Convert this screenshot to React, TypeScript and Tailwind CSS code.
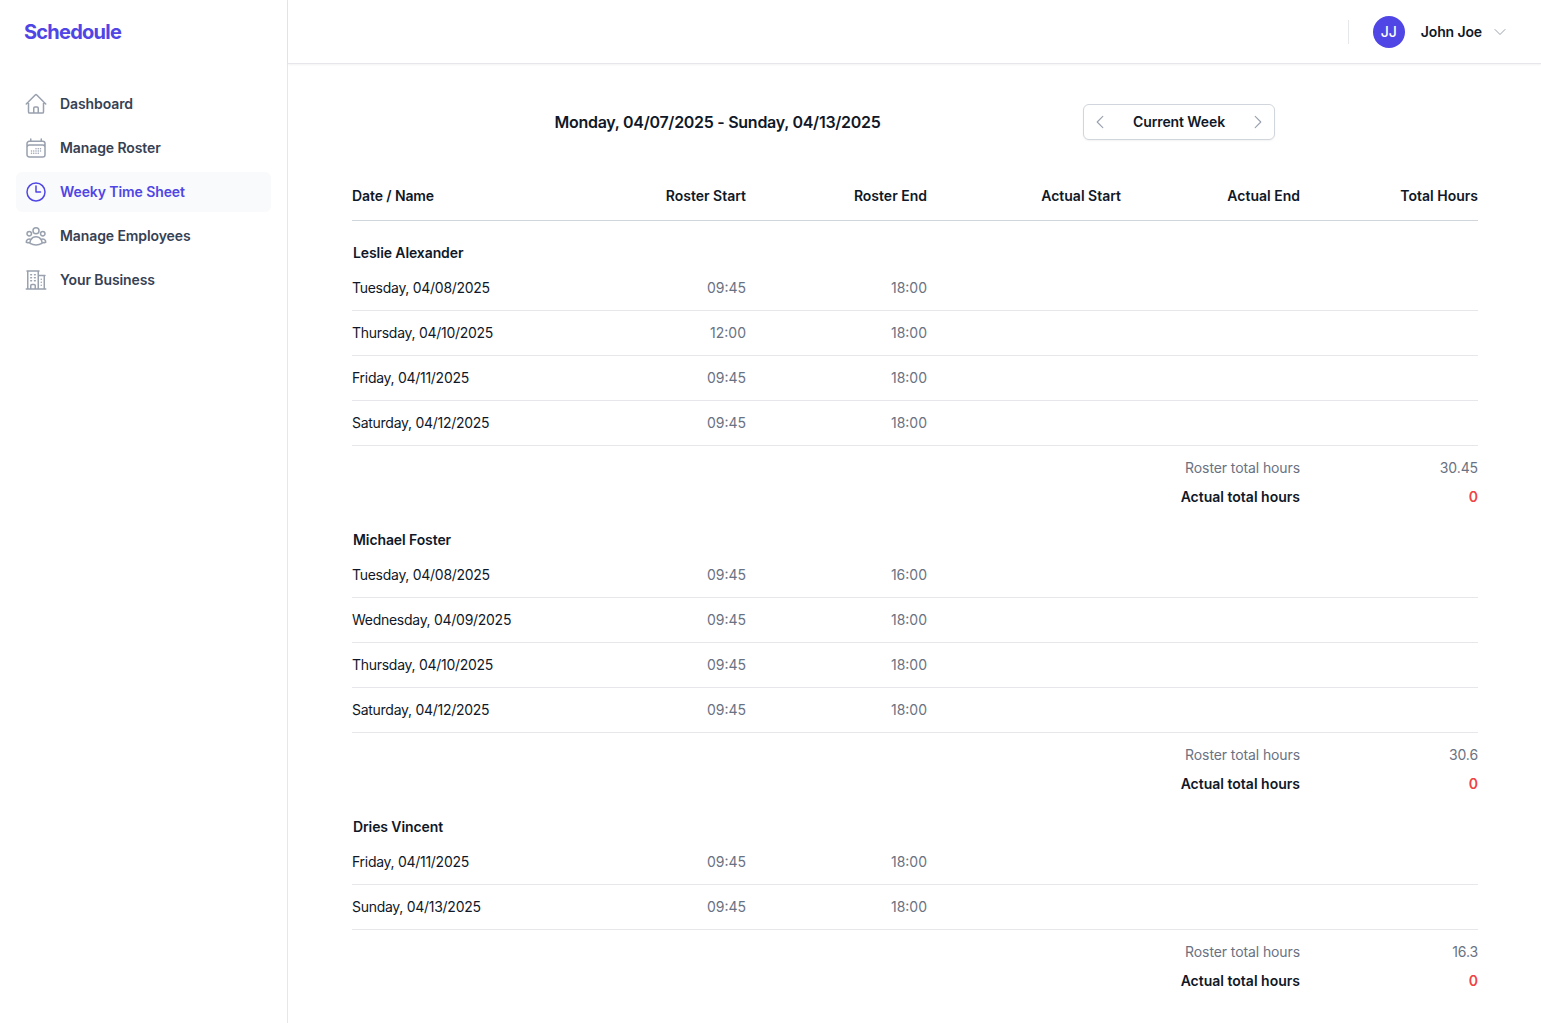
import { FC, ReactNode } from "react";
import {
  HiOutlineBuildingOffice2,
  HiOutlineCalendarDays,
  HiOutlineChevronDown,
  HiOutlineChevronLeft,
  HiOutlineChevronRight,
  HiOutlineClock,
  HiOutlineHome,
  HiOutlineUserGroup,
} from "react-icons/hi2";

const NAV = [
  { label: "Dashboard", Icon: HiOutlineHome },
  { label: "Manage Roster", Icon: HiOutlineCalendarDays },
  { label: "Weeky Time Sheet", Icon: HiOutlineClock, active: true },
  { label: "Manage Employees", Icon: HiOutlineUserGroup },
  { label: "Your Business", Icon: HiOutlineBuildingOffice2 },
];

const PEOPLE = [
  {
    name: "Leslie Alexander",
    total: "30.45",
    rows: [
      ["Tuesday, 04/08/2025", "09:45", "18:00"],
      ["Thursday, 04/10/2025", "12:00", "18:00"],
      ["Friday, 04/11/2025", "09:45", "18:00"],
      ["Saturday, 04/12/2025", "09:45", "18:00"],
    ],
  },
  {
    name: "Michael Foster",
    total: "30.6",
    rows: [
      ["Tuesday, 04/08/2025", "09:45", "16:00"],
      ["Wednesday, 04/09/2025", "09:45", "18:00"],
      ["Thursday, 04/10/2025", "09:45", "18:00"],
      ["Saturday, 04/12/2025", "09:45", "18:00"],
    ],
  },
  {
    name: "Dries Vincent",
    total: "16.3",
    rows: [
      ["Friday, 04/11/2025", "09:45", "18:00"],
      ["Sunday, 04/13/2025", "09:45", "18:00"],
    ],
  },
];

const COLS = "grid grid-cols-[213px_181px_181px_194px_179px_178px]";

const Sidebar: FC = () => {
  return (
    <aside className="w-[288px] shrink-0 border-r border-gray-200 px-4">
      <div className="flex h-16 items-center px-2 text-xl font-bold tracking-[-0.75px] text-[#4f46e5]">
        Schedoule
      </div>
      <nav className="mt-5 flex flex-col gap-1">
        {NAV.map(({ label, Icon, active }) => (
          <a
            key={label}
            className={
              active
                ? "flex h-10 items-center gap-3 rounded-md bg-gray-50 px-2 text-sm font-semibold tracking-[-0.1px] text-[#4f46e5]"
                : "flex h-10 items-center gap-3 rounded-md px-2 text-sm font-semibold tracking-[-0.1px] text-gray-700"
            }
          >
            <Icon
              className={active ? "size-6 text-[#4f46e5]" : "size-6 text-gray-400"}
            />
            {label}
          </a>
        ))}
      </nav>
    </aside>
  );
};

const Header: FC = () => {
  return (
    <header className="flex h-16 items-center justify-end border-b border-gray-200 pr-[33px] shadow-xs">
      <div className="h-6 w-px bg-gray-200" />
      <div className="ml-6 flex size-8 items-center justify-center rounded-full bg-[#4f46e5] text-sm font-medium text-white">
        JJ
      </div>
      <span className="ml-4 text-sm font-semibold tracking-[-0.12px] text-gray-900">
        John Joe
      </span>
      <HiOutlineChevronDown className="ml-2.5 size-4 text-gray-400" />
    </header>
  );
};

const Head: FC<{ children: ReactNode }> = ({ children }) => (
  <div className="text-right text-sm font-semibold text-gray-900">{children}</div>
);

const Group: FC<(typeof PEOPLE)[number]> = ({ name, total, rows }) => {
  return (
    <section>
      <div className="pt-[11px] pl-px text-sm leading-5 font-semibold tracking-[-0.1px] text-gray-900">
        {name}
      </div>
      <div className="mt-[3px]">
        {rows.map(([day, start, end]) => (
          <div
            key={day}
            className={`${COLS} h-[45px] items-center border-b border-gray-200 text-sm`}
          >
            <span className="tracking-[-0.28px] whitespace-nowrap text-gray-900">{day}</span>
            <span className="text-right text-gray-500">{start}</span>
            <span className="text-right text-gray-500">{end}</span>
          </div>
        ))}
      </div>
      <div className="flex h-[44px] items-center justify-end text-sm tracking-[-0.1px] text-gray-500">
        <span>Roster total hours</span>
        <span className="w-[178px] text-right">{total}</span>
      </div>
      <div className="-mt-[15px] flex h-[44px] items-center justify-end text-sm font-semibold text-gray-900">
        <span>Actual total hours</span>
        <span className="w-[178px] text-right text-[#ef4444]">0</span>
      </div>
    </section>
  );
};

export default function App() {
  return (
    <div className="flex h-[1023px] overflow-hidden bg-white font-['Inter',sans-serif]">
      <Sidebar />
      <div className="min-w-0 flex-1">
        <Header />
        <main className="pt-10 pr-[63px] pl-16">
          <div className="flex h-9 items-center">
            <h1 className="w-[731px] text-center text-base font-semibold tracking-[-0.28px] text-gray-900">
              Monday, 04/07/2025 - Sunday, 04/13/2025
            </h1>
            <div className="flex h-9 w-[192px] items-center justify-between rounded-md border border-gray-300 bg-white px-[7px] text-sm font-semibold tracking-[-0.1px] text-gray-900 shadow-xs">
              <HiOutlineChevronLeft className="size-[18px] text-gray-400" />
              Current Week
              <HiOutlineChevronRight className="size-[18px] text-gray-400" />
            </div>
          </div>
          <div className={`${COLS} mt-[46px] mb-[11px] border-b border-gray-300 pb-[14px]`}>
            <div className="text-sm font-semibold tracking-[-0.1px] text-gray-900">Date / Name</div>
            <Head>Roster Start</Head>
            <Head>Roster End</Head>
            <Head>Actual Start</Head>
            <Head>Actual End</Head>
            <Head>Total Hours</Head>
          </div>
          {PEOPLE.map((p) => (
            <Group key={p.name} {...p} />
          ))}
        </main>
      </div>
    </div>
  );
}
